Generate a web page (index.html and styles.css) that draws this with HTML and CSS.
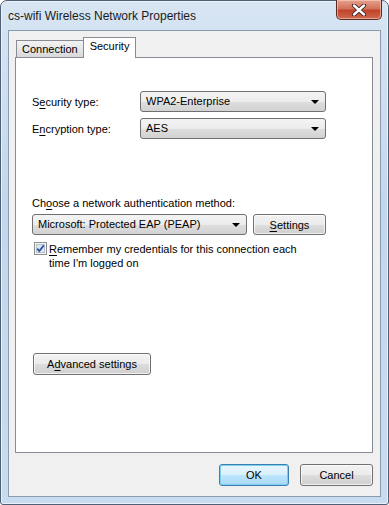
FILE: index.html
```html
<!DOCTYPE html>
<html lang="en">
<head>
    <meta charset="UTF-8">
    <title>cs-wifi Wireless Network Properties</title>
    <link rel="stylesheet" href="styles.css">
</head>
<body>
    <div class="window">
        <div class="titlebar">
            <span class="title">cs-wifi Wireless Network Properties</span>
            <button class="close-btn" title="Close">
                <svg width="16" height="12" viewBox="0 0 16 12">
                    <path d="M3 1.5 L13 10.5 M13 1.5 L3 10.5" stroke="#3a2020" stroke-width="4.2" stroke-linecap="round"/>
                    <path d="M3 1.5 L13 10.5 M13 1.5 L3 10.5" stroke="#ffffff" stroke-width="2.4" stroke-linecap="round"/>
                </svg>
            </button>
        </div>
        <div class="client">
            <div class="tabs">
                <div class="tab">Connection</div>
                <div class="tab active">Security</div>
            </div>
            <div class="panel">
                <div class="form-grid">
                    <label>S<u>e</u>curity type:</label>
                    <div class="combo">WPA2-Enterprise</div>
                    <label>E<u>n</u>cryption type:</label>
                    <div class="combo">AES</div>
                </div>

                <div class="auth">
                    <p class="auth-label">Ch<u>o</u>ose a network authentication method:</p>
                    <div class="auth-row">
                        <div class="combo wide">Microsoft: Protected EAP (PEAP)</div>
                        <button class="btn settings-btn"><u>S</u>ettings</button>
                    </div>
                    <label class="check-row">
                        <span class="checkbox">
                            <svg width="13" height="13" viewBox="0 0 13 13">
                                <rect x="0.5" y="0.5" width="12" height="12" fill="#f4f4f4" stroke="#8e8f8f"/>
                                <rect x="2.5" y="2.5" width="8" height="8" fill="#dfe6ee" stroke="#b8c3cf"/>
                                <path d="M3.2 6.6 L5.3 9 L9.8 3.4" fill="none" stroke="#2d55a8" stroke-width="1.8"/>
                            </svg>
                        </span>
                        <span class="check-text">Remember my credentials for this connection each time I'm logged on</span>
                    </label>
                </div>

                <button class="btn advanced-btn">A<u>d</u>vanced settings</button>
            </div>
            <div class="footer">
                <button class="btn ok-btn">OK</button>
                <button class="btn">Cancel</button>
            </div>
        </div>
    </div>
</body>
</html>
```

FILE: styles.css
```css
body {
    margin: 0;
    width: 389px;
    height: 505px;
    background: #ffffff;
    font-family: "Liberation Sans", Arial, sans-serif;
    font-size: 11px;
    color: #000;
    overflow: hidden;
}
u {
    text-decoration-thickness: 1px;
    text-underline-offset: 2px;
}
.window {
    box-sizing: border-box;
    width: 389px;
    height: 505px;
    border: 1px solid #4f6074;
    border-radius: 7px 7px 3px 3px;
    background: linear-gradient(180deg, #d7e5f3 0%, #c3d7ec 40%, #c9dbef 100%);
    display: flex;
    flex-direction: column;
    box-shadow: inset 0 0 0 1px #e9f1fa;
}
.titlebar {
    height: 29px;
    display: flex;
    align-items: flex-start;
    justify-content: space-between;
}
.title {
    margin: 8px 0 0 7px;
    font-size: 12px;
    color: #1b1b1b;
}
.close-btn {
    width: 46px;
    height: 20px;
    margin-right: 6px;
    margin-top: -1px;
    border: 1px solid #5a2a22;
    border-top: none;
    border-radius: 0 0 5px 5px;
    background: linear-gradient(180deg, #e6a18e 0%, #d3725c 45%, #c0432a 55%, #cf6a4f 100%);
    box-shadow: inset 0 0 0 1px rgba(255, 210, 195, 0.6);
    padding: 0;
    display: flex;
    align-items: center;
    justify-content: center;
}
.client {
    flex: 1;
    margin: 0 7px 7px 7px;
    background: #f0f0f0;
    border: 1px solid #8a9bb0;
    display: flex;
    flex-direction: column;
}
.tabs {
    display: flex;
    align-items: flex-end;
    padding: 6px 0 0 7px;
    height: 20px;
}
.tab {
    height: 16px;
    padding: 0 5px;
    line-height: 17px;
    border: 1px solid #898c95;
    border-bottom: none;
    background: linear-gradient(180deg, #f3f3f3 0%, #e6e6e6 50%, #d9d9d9 100%);
    color: #000;
}
.tab.active {
    height: 20px;
    line-height: 17px;
    margin-left: -1px;
    margin-bottom: -1px;
    padding: 0 6px;
    background: #ffffff;
    position: relative;
    z-index: 1;
}
.panel {
    margin: 0 7px 0 6px;
    height: 396px;
    background: #ffffff;
    border: 1px solid #898c95;
    padding: 33px 16px 0 16px;
    box-sizing: border-box;
}
.form-grid {
    display: grid;
    grid-template-columns: 108px 186px;
    row-gap: 6px;
    align-items: center;
}
.combo {
    box-sizing: border-box;
    height: 21px;
    line-height: 19px;
    padding: 0 20px 0 5px;
    border: 1px solid #707070;
    border-radius: 3px;
    background: linear-gradient(180deg, #f4f4f4 0%, #ececec 50%, #dedede 51%, #d2d2d2 100%);
    position: relative;
    white-space: nowrap;
}
.combo::after {
    content: "";
    position: absolute;
    right: 6px;
    top: 8px;
    border-left: 4px solid transparent;
    border-right: 4px solid transparent;
    border-top: 4px solid #000;
}
.auth {
    margin-top: 57px;
}
.auth-label {
    margin: 0 0 3px 0;
    line-height: 15px;
}
.auth-row {
    display: flex;
    gap: 6px;
}
.combo.wide {
    width: 215px;
}
.btn {
    box-sizing: border-box;
    height: 22px;
    padding: 0;
    font-family: inherit;
    font-size: 11px;
    color: #000;
    border: 1px solid #707070;
    border-radius: 3px;
    background: linear-gradient(180deg, #f2f2f2 0%, #ebebeb 50%, #dddddd 51%, #cfcfcf 100%);
    box-shadow: inset 0 0 0 1px rgba(255, 255, 255, 0.7);
    width: 73px;
}
.settings-btn {
    height: 21px;
}
.check-row {
    display: flex;
    align-items: flex-start;
    margin-top: 7px;
    padding-left: 2px;
}
.checkbox {
    width: 13px;
    height: 13px;
    margin-top: 0;
    margin-right: 2px;
    flex-shrink: 0;
}
.check-text {
    width: 250px;
    line-height: 14px;
}
.check-text::first-letter {
    text-decoration: underline;
    text-underline-offset: 2px;
}
.advanced-btn {
    width: 118px;
    margin-top: 83px;
    margin-left: 1px;
}
.footer {
    display: flex;
    justify-content: flex-end;
    gap: 11px;
    padding: 11px 7px 0 0;
}
.ok-btn {
    width: 70px;
    border-color: #3c7fb1;
    box-shadow: inset 0 0 0 1px #7fd0ef;
    background: linear-gradient(180deg, #eaf6fd 0%, #d9f0fc 50%, #bee6fd 51%, #a7d9f5 100%);
}
```
